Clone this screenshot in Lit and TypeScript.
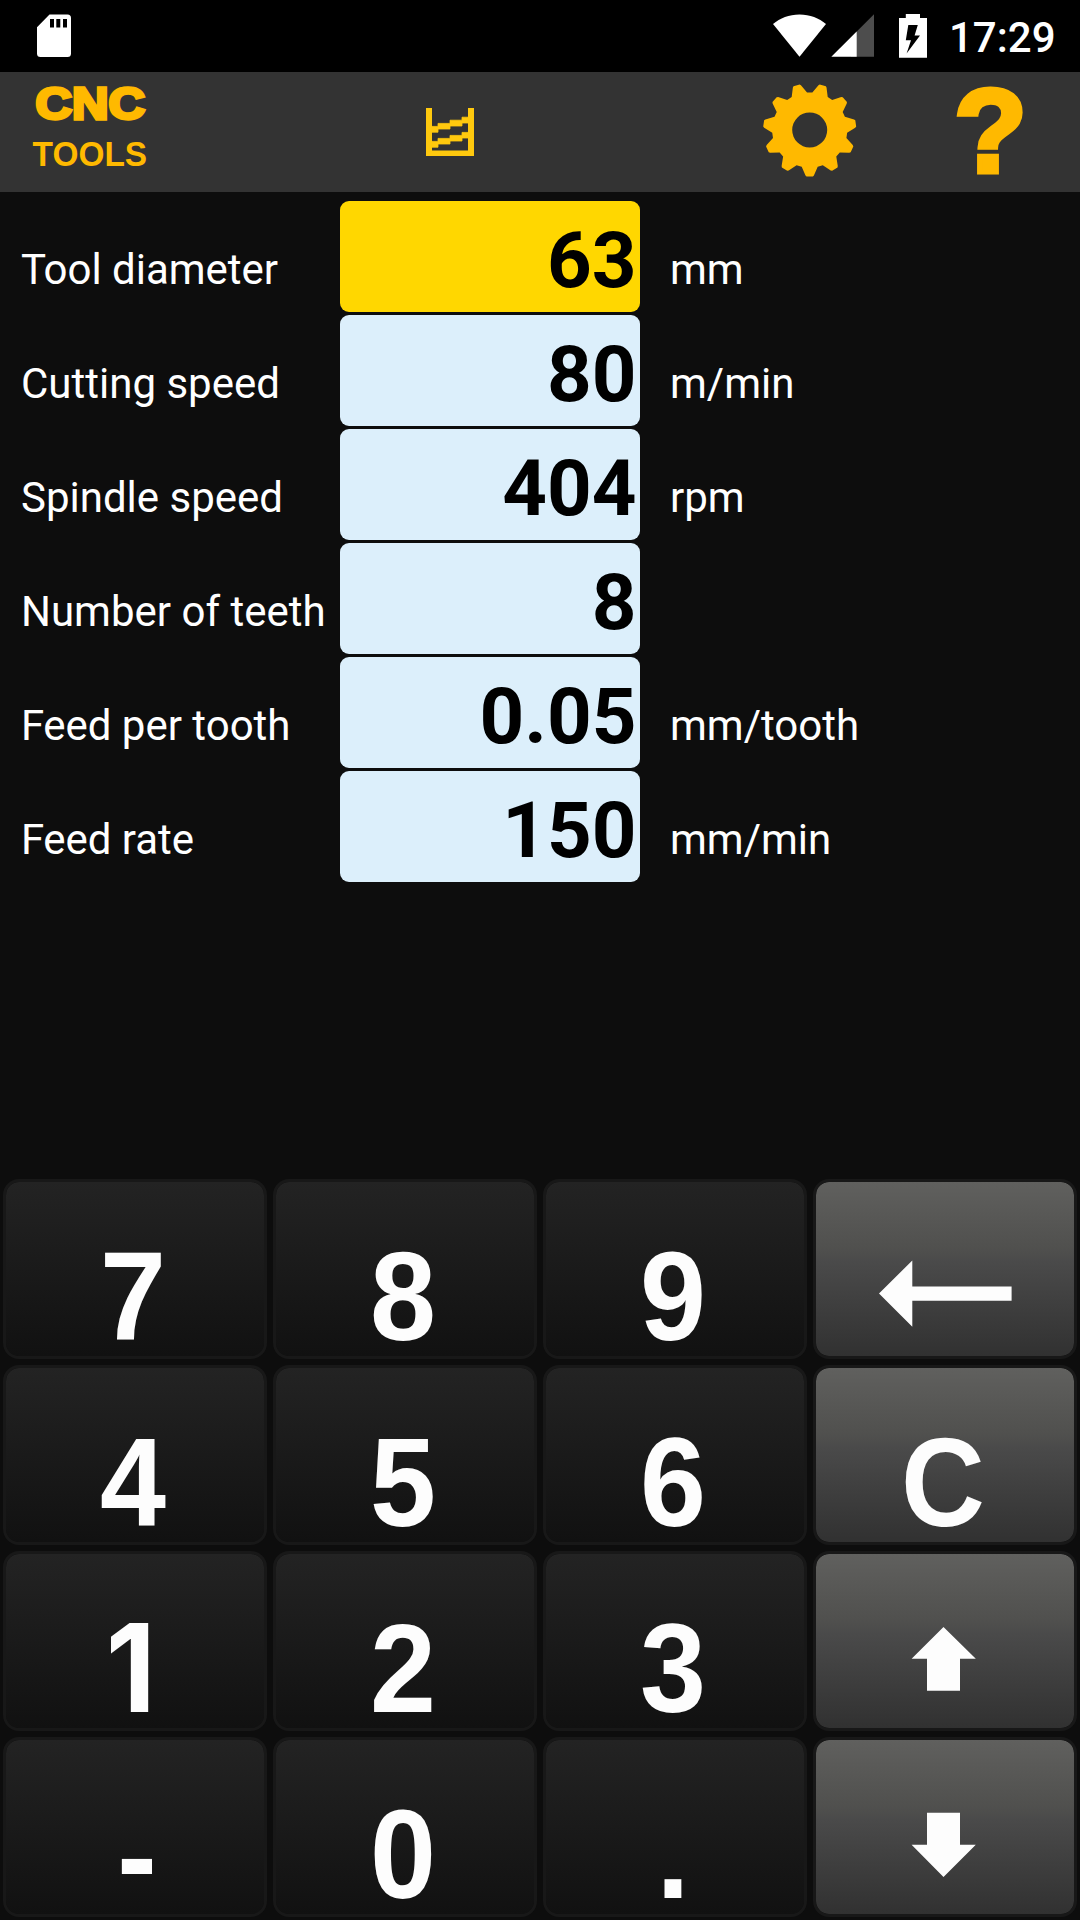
import { LitElement, html, css, svg } from "lit";
import { customElement, property, state } from "lit/decorators.js";
import { classMap } from "lit/directives/class-map.js";

interface Field {
  label: string;
  value: string;
  unit: string;
}

const FIELDS: Field[] = [
  { label: "Tool diameter", value: "63", unit: "mm" },
  { label: "Cutting speed", value: "80", unit: "m/min" },
  { label: "Spindle speed", value: "404", unit: "rpm" },
  { label: "Number of teeth", value: "8", unit: "" },
  { label: "Feed per tooth", value: "0.05", unit: "mm/tooth" },
  { label: "Feed rate", value: "150", unit: "mm/min" },
];

const KEYS = [
  "7", "8", "9", "back",
  "4", "5", "6", "C",
  "1", "2", "3", "up",
  "-", "0", ".", "down",
];

const ARROWS: Record<string, string> = {
  back: "M63 111.5 96.3 78.5V104.6H195.6V118.7H96.3V144.7Z",
  up: "M127.5 73 159.8 104.8H144V136.8H111V104.8H95.6Z",
  down: "M127.5 137 159.8 104.8H144V72.8H111V104.8H95.6Z",
};

/* Outline of an eleven-tooth gear centred on the origin, first tooth down. */
function gearPath(): string {
  const tooth = [[-8, 36.7], [-4.2, 45.4], [-3.2, 46.5], [3.2, 46.5], [4.2, 45.4], [8, 36.7]];
  const pts: string[] = [];
  for (let i = 0; i < 11; i++) {
    const a = (-i * 2 * Math.PI) / 11;
    for (const [x, y] of [...tooth].reverse().map((p) => [-p[0], p[1]])) {
      const rx = x * Math.cos(a) - y * Math.sin(a);
      const ry = x * Math.sin(a) + y * Math.cos(a);
      pts.push(`${rx.toFixed(2)} ${ry.toFixed(2)}`);
    }
  }
  return `M${pts.join("L")}ZM-17.5 0a17.5 17.5 0 1 0 35 0a17.5 17.5 0 1 0 -35 0Z`;
}

@customElement("status-bar")
class StatusBar extends LitElement {
  static styles = css`
    :host {
      display: flex;
      align-items: flex-start;
      height: 72px;
      box-sizing: border-box;
      padding: 14px 25px 0 37px;
      background: #000;
      color: #fff;
    }
    svg { display: block; flex: none; }
    .wifi { margin-left: auto; }
    .signal { margin-left: 5px; }
    .battery { margin-left: 25px; }
    .clock {
      width: 106px;
      margin-left: 22px;
      padding-top: 2px;
      font: 500 42px/44px Roboto, sans-serif;
      white-space: nowrap;
    }
  `;

  render() {
    return html`
      <svg width="34" height="44" viewBox="0 0 34 44">
        <path fill="#fff" fill-rule="evenodd"
          d="M12.5 .6H30.5A3.5 3.5 0 0 1 34 4.1V39.5A3.5 3.5 0 0 1 30.5 43H3.5A3.5 3.5 0 0 1 0 39.5V13.2ZM13 5V13.5H17V5ZM19.3 5V13.5H23.3V5ZM26 5V13.5H30V5Z" />
      </svg>
      <svg class="wifi" width="53" height="44" viewBox="0 0 53 44">
        <path fill="#fff" d="M26.5 42.8 0 10C7 4 16 .4 26.5 .4S46 4 53 10Z" />
      </svg>
      <svg class="signal" width="43" height="44" viewBox="0 0 43 44">
        <path fill="#4d4d4d" d="M43 .3V42.8H20V23.3Z" />
        <path fill="#fff" d="M.3 42.8H25.7V17.6Z" />
      </svg>
      <svg class="battery" width="28" height="44" viewBox="0 0 28 44">
        <path fill="#fff" fill-rule="evenodd"
          d="M6.8 0H21V4H28V43.8H0V4H6.8ZM9.3 11 6.8 26.2H12L7.6 39.5 21 21.5H15.6L18.8 11Z" />
      </svg>
      <div class="clock">17:29</div>
    `;
  }
}

@customElement("tool-bar")
class ToolBar extends LitElement {
  static styles = css`
    :host {
      display: grid;
      grid-template-columns: repeat(6, 180px);
      height: 120px;
      background: #333;
      color: #ffb900;
      font-family: "Liberation Sans", Arial, sans-serif;
      font-weight: 700;
    }
    svg { display: block; fill: currentColor; overflow: visible; }
    .chart { grid-column: 3; color: #ffc90e; }
    .gear { grid-column: 5; }
    .name { font-size: 44.4px; stroke: currentColor; stroke-width: 3.3px; }
    .sub { font-size: 33px; }
    .help { font-size: 119.5px; stroke: currentColor; stroke-width: 5px; }
  `;

  render() {
    return html`
      <svg width="180" height="120" viewBox="0 0 180 120">
        <text class="name" x="35.4" y="47.4" textLength="109.6" lengthAdjust="spacingAndGlyphs">CNC</text>
        <text class="sub" transform="translate(32.6 93.7) scale(1.013 1.04)">TOOLS</text>
      </svg>
      <svg class="chart" width="180" height="120" viewBox="0 0 180 120">
        <g transform="translate(66 36)">
          <path d="M0 0H6V42.6H42V0H48V48H0Z" />
          <g stroke="currentColor" stroke-width=".8">
            <path d="M6 18.4H12V15.4H24V12.2H36V9.2H42V15H36V18H24V21H12V24.2H6Z" />
            <path d="M6 33.4H12V30.4H24V27.4H36V24.4H42V30H36V33H24V36H12V39.2H6Z" />
          </g>
        </g>
      </svg>
      <svg class="gear" width="180" height="120" viewBox="0 0 180 120">
        <path transform="translate(89.7 58)" fill-rule="evenodd" d=${gearPath()} />
      </svg>
      <svg width="180" height="120" viewBox="0 0 180 120">
        <text class="help" x="54" y="100.2">?</text>
      </svg>
    `;
  }
}

@customElement("field-row")
class FieldRow extends LitElement {
  static styles = css`
    :host {
      display: grid;
      grid-template-columns: 319px 300px 1fr;
      height: 111px;
      padding-left: 21px;
      font-family: Roboto, sans-serif;
      color: #fff;
    }
    .label, .unit {
      padding-top: 39px;
      font-size: 42px;
      line-height: 60px;
      white-space: nowrap;
    }
    .t::first-letter { letter-spacing: -2.6px; }
    .f::first-letter { letter-spacing: -1px; }
    .unit { padding-left: 30px; }
    .value {
      box-sizing: border-box;
      height: 111px;
      padding: 20px 3.5px 0 0;
      border-radius: 9px;
      background: #dceffb;
      color: #000;
      font-size: 78px;
      font-weight: 700;
      line-height: 80px;
      text-align: right;
    }
    .active { background: #ffd700; }
  `;

  @property({ attribute: false }) field!: Field;
  @property({ type: Boolean }) active = false;

  render() {
    const { label, value, unit } = this.field;
    /* Tuck the first lowercase letter under the arm of T and F. */
    const labelClasses = { label: true, t: label[0] === "T", f: label[0] === "F" };
    return html`
      <div class=${classMap(labelClasses)}>${label}</div>
      <div class=${classMap({ value: true, active: this.active })}>${value}</div>
      <div class="unit">${unit}</div>
    `;
  }
}

@customElement("pad-key")
class PadKey extends LitElement {
  static styles = css`
    :host { display: block; }
    .key {
      box-sizing: border-box;
      height: 180px;
      border: 3px solid #181818;
      border-radius: 16px;
      background: linear-gradient(#232323, #111) padding-box;
      color: #fdfdfd;
      cursor: pointer;
    }
    .action {
      background: linear-gradient(#60605e, #50504e 38%, #4a4a4a 46%, #313131) padding-box;
    }
    .face {
      padding: 56px 4px 0 0;
      font: 700 121px/120px "Liberation Sans", Arial, sans-serif;
      text-align: center;
      transform: scale(.98, 1.04);
      transform-origin: 127px 158px;
    }
    .minus { padding: 57px 0 0 4px; }
    .clear { transform: scale(.96, 1.04); }
    .one {
      padding: 54px 9px 0 0;
      font-family: Inter, sans-serif;
      font-size: 122px;
      transform: scaleX(.95);
    }
    svg { display: block; width: 258px; height: 174px; fill: currentColor; }
  `;

  @property() name = "";

  render() {
    const arrow = ARROWS[this.name];
    const action = arrow !== undefined || this.name === "C";
    const face = {
      face: true,
      minus: this.name === "-",
      clear: this.name === "C",
      one: this.name === "1",
    };
    return html`
      <div class=${classMap({ key: true, action })}>
        ${arrow
          ? html`<svg viewBox="0 0 258 174">${svg`<path d=${arrow} />`}</svg>`
          : html`<div class=${classMap(face)}>${this.name}</div>`}
      </div>
    `;
  }
}

@customElement("app-root")
class AppRoot extends LitElement {
  static styles = css`
    :host {
      display: flex;
      flex-direction: column;
      width: 1080px;
      height: 1920px;
      overflow: hidden;
      background: #0d0d0d;
    }
    .fields {
      display: flex;
      flex-direction: column;
      gap: 3px;
      padding-top: 9px;
    }
    .pad {
      display: grid;
      grid-template-columns: repeat(4, 264px);
      gap: 6px;
      margin-top: auto;
      padding: 0 3px 3px;
    }
  `;

  @state() private selected = 0;

  render() {
    return html`
      <status-bar></status-bar>
      <tool-bar></tool-bar>
      <div class="fields">
        ${FIELDS.map((f, i) => html`
          <field-row .field=${f} ?active=${i === this.selected}
            @click=${() => (this.selected = i)}></field-row>
        `)}
      </div>
      <div class="pad">
        ${KEYS.map((k) => html`<pad-key name=${k}></pad-key>`)}
      </div>
    `;
  }
}
